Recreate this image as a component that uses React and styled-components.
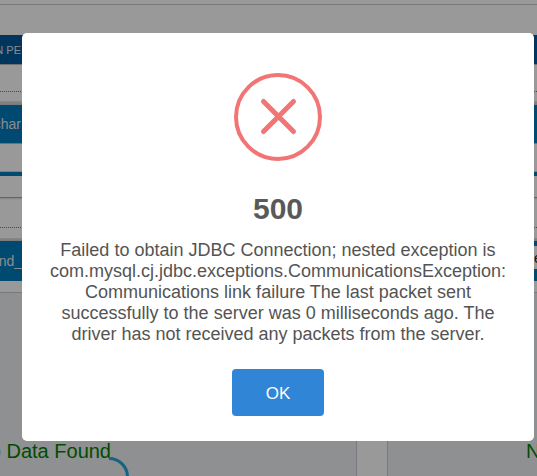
import React from "react";
import styled, { createGlobalStyle } from "styled-components";

const GlobalStyle = createGlobalStyle`
  *, *::before, *::after { box-sizing: border-box; }
  html, body { margin: 0; height: 100%; overflow: hidden; }
  body { background: #fff; font-family: "Liberation Sans", Arial, sans-serif; }
  h2, p { margin: 0; font-weight: 400; }
`;

const Page = styled.main`
  display: flex;
  flex-direction: column;
  height: 100vh;
  overflow: hidden;
`;

const TopStrip = styled.header`
  height: 5px;
  border-bottom: 1px solid #c8ccd2;
`;

const Space = styled.div`
  flex: none;
  height: ${(p) => p.$h}px;
`;

const Bar = styled.div`
  flex: none;
  display: flex;
  align-items: center;
  justify-content: space-between;
  height: ${(p) => p.$h}px;
  background: ${(p) => p.$color};
  border-bottom: ${(p) => (p.$edge ? "1px solid #b9bec4" : "0")};
`;

const BarLabel = styled.span`
  display: flex;
  justify-content: flex-end;
  width: ${(p) => p.$w}px;
  overflow: hidden;
  white-space: nowrap;
  color: #e4e8ec;
  font-size: ${(p) => p.$size}px;
`;

const Dotted = styled.div`
  flex: none;
  height: 1px;
  border-top: 1px dotted #777;
`;

const Shade = styled.div`
  flex: none;
  height: ${(p) => p.$h}px;
  background: linear-gradient(#e4e4e4, #c9cbcd);
`;

const Rule = styled.div`
  flex: none;
  height: 3px;
  border-top: 1px solid #aaa;
  background: linear-gradient(#dedede, #fff);
`;

const Field = styled.input`
  width: 3px;
  height: 23px;
  margin-bottom: 7px;
  padding: 0;
  border: 0;
  background: #fff;
  color: #222;
  font: 14px "Liberation Sans", Arial, sans-serif;
`;

const Charts = styled.section`
  flex: 1;
  display: grid;
  grid-template-columns: 357fr 30px 150fr;
  min-height: 0;
  border-top: 1px solid #c8ccd2;
`;

const Panel = styled.div`
  grid-column: ${(p) => p.$col};
  display: flex;
  align-items: flex-end;
  justify-content: ${(p) => (p.$col === 3 ? "flex-end" : "flex-start")};
  padding-bottom: 13px;
  overflow: hidden;
  background: #eef0f3;
  border: 0 solid #c8ccd2;
  border-width: ${(p) => (p.$col === 3 ? "0 0 0 1px" : "0 1px 0 0")};
`;

const Empty = styled.p`
  position: relative;
  display: flex;
  justify-content: ${(p) => (p.$start ? "flex-start" : "flex-end")};
  width: ${(p) => p.$w}px;
  white-space: nowrap;
  color: #008000;
  font-size: 20px;
  line-height: 23px;
`;

const Loader = styled.svg`
  position: absolute;
  left: 89px;
  top: 17px;
  width: 40px;
  height: 40px;
`;

const Overlay = styled.div`
  position: fixed;
  inset: 0;
  display: flex;
  align-items: flex-start;
  justify-content: center;
  padding: 33px 3px 20px 22px;
  background: rgba(0, 0, 0, 0.4);
`;

const Modal = styled.section`
  display: flex;
  flex-direction: column;
  align-items: center;
  width: 100%;
  max-width: 512px;
  padding: 40px 20px 25px;
  border-radius: 5px;
  background: #fff;
  text-align: center;
`;

const ErrorIcon = styled.svg`
  width: 88px;
  height: 88px;
  margin-bottom: 31px;
`;

const Title = styled.h2`
  margin-bottom: 14px;
  color: #595959;
  font-size: 30px;
  font-weight: 700;
  line-height: 34px;
`;

const Message = styled.p`
  color: #545454;
  font-size: 18px;
  line-height: 21px;
`;

const Confirm = styled.button`
  width: 92px;
  height: 47px;
  margin-top: 24px;
  padding: 2px 0 0;
  border: 0;
  border-radius: 4px;
  background: #3085d6;
  color: #fff;
  font: 17px "Liberation Sans", Arial, sans-serif;
  cursor: pointer;
`;

export default function App() {
  return (
    <>
      <GlobalStyle />
      <Page>
        <TopStrip />
        <Space $h={30} />
        <Bar $h={30} $color="#005a9c" $edge>
          <BarLabel $size={11} $w={21}>N PE</BarLabel>
        </Bar>
        <Space $h={26} />
        <Dotted />
        <Space $h={9} />
        <Shade $h={4} />
        <Bar $h={39} $color="#007abc" $edge>
          <BarLabel $size={14} $w={21}>char</BarLabel>
        </Bar>
        <Space $h={27} />
        <Shade $h={1} />
        <Bar $h={4} $color="#007abc" />
        <Space $h={21} />
        <Rule />
        <Space $h={27} />
        <Dotted />
        <Space $h={10} />
        <Shade $h={3} />
        <Bar $h={40} $color="#007abc">
          <BarLabel $size={14} $w={22}>and_</BarLabel>
          <Field aria-label="Filter" defaultValue="e" />
        </Bar>
        <Space $h={11} />
        <Charts>
          <Panel $col={1}>
            <Empty $w={111}>
              No Data Found
              <Loader viewBox="0 0 40 40" aria-hidden="true">
                <path d="M20 1.5A18.5 18.5 0 0 1 38.5 20" fill="none" stroke="#26a5d6" strokeWidth="3" />
              </Loader>
            </Empty>
          </Panel>
          <Panel $col={3}>
            <Empty $w={11} $start>No Data Found</Empty>
          </Panel>
        </Charts>
      </Page>
      <Overlay>
        <Modal role="dialog" aria-modal="true" aria-labelledby="error-title" aria-describedby="error-message">
          <ErrorIcon viewBox="0 0 88 88" aria-hidden="true">
            <circle cx="44" cy="44" r="42" fill="none" stroke="#f27474" strokeWidth="4" />
            <path d="M29.5 28.5L59.5 58.5M59.5 28.5L29.5 58.5" stroke="#f27474" strokeWidth="5" strokeLinecap="round" />
          </ErrorIcon>
          <Title id="error-title">500</Title>
          <Message id="error-message">
            Failed to obtain JDBC Connection; nested exception is
            com.mysql.cj.jdbc.exceptions.CommunicationsException: Communications link failure The last packet sent
            successfully to the server was 0 milliseconds ago. The driver has not received any packets from the server.
          </Message>
          <Confirm type="button">OK</Confirm>
        </Modal>
      </Overlay>
    </>
  );
}
